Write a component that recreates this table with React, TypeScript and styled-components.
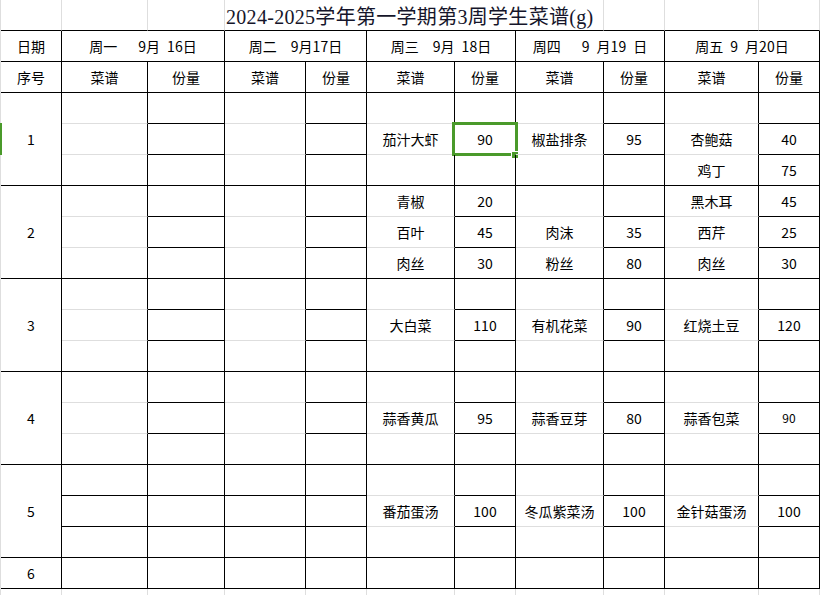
import React from 'react';
import styled, { createGlobalStyle } from 'styled-components';

const BLACK = '#000';
const GRID = '#dedede';
const GREEN = '#4a9a2a';
const H = '\u2002';

const GlobalStyle = createGlobalStyle`
  html, body { margin: 0; padding: 0; background: #fff; overflow: hidden; }
  body {
    font-family: "Noto Sans CJK SC", "Liberation Sans", sans-serif;
    color: #000;
  }
`;

const Sheet = styled.div`
  position: relative;
  width: max-content;
  border-left: 1px solid ${GRID};
`;

const Grid = styled.div`
  display: grid;
  grid-template-columns: 61px 86px 77px 81px 61px 88px 61px 88px 61px 94px 61px;
  grid-auto-rows: 31px;
`;

type Line = 'black' | 'gray' | 'none';
const lineColor = (l: Line) => (l === 'black' ? BLACK : l === 'gray' ? GRID : 'transparent');

const Cell = styled.div<{ $span?: number; $rows?: number; $bottom?: Line; $right?: Line; $small?: boolean }>`
  grid-column: span ${(p) => p.$span ?? 1};
  grid-row: span ${(p) => p.$rows ?? 1};
  box-sizing: border-box;
  position: relative;
  border-right: 1px solid ${(p) => lineColor(p.$right ?? 'black')};
  border-bottom: 1px solid ${(p) => lineColor(p.$bottom ?? 'black')};
  display: flex;
  align-items: center;
  justify-content: center;
  font-size: ${(p) => (p.$small ? '12px' : '14px')};
  font-weight: 400;
  line-height: 1;
  white-space: pre;
`;

const TitleCell = styled(Cell)`
  justify-content: flex-start;
  padding: 3px 0 0 1px;
  overflow: visible;
  font-family: "Liberation Serif", "Noto Sans CJK SC", serif;
  font-size: 20px;
  letter-spacing: 0.3px;
  color: #15152a;
`;

const Selection = styled.div`
  position: absolute;
  left: -3px;
  top: -2px;
  width: 66px;
  height: 34px;
  box-sizing: border-box;
  border: 3px solid ${GREEN};
  pointer-events: none;
`;

const FillHandle = styled.div`
  position: absolute;
  left: 56px;
  top: 26px;
  width: 8px;
  height: 8px;
  box-sizing: border-box;
  background: ${GREEN};
  border: 1px solid #fff;
`;

const RowMarker = styled.div`
  position: absolute;
  left: -1px;
  top: 123px;
  width: 2px;
  height: 32px;
  background: ${GREEN};
`;

type Val = string | { t: string; small?: boolean; selected?: boolean };

interface Item {
  no: string;
  rows: Val[][];
  solid: number[]; // column indexes (0 = B) with black inner lines
}

const QTY = [1, 3, 5, 7, 9];
const ITEM5 = [0, 1, 2, 3, 5, 7, 9];

const e = ['', '', '', '', '', '', '', '', '', ''];

const items: Item[] = [
  {
    no: '1',
    solid: QTY,
    rows: [
      e,
      ['', '', '', '', '茄汁大虾', { t: '90', selected: true }, '椒盐排条', '95', '杏鲍菇', '40'],
      ['', '', '', '', '', '', '', '', '鸡丁', '75'],
    ],
  },
  {
    no: '2',
    solid: QTY,
    rows: [
      ['', '', '', '', '青椒', '20', '', '', '黑木耳', '45'],
      ['', '', '', '', '百叶', '45', '肉沫', '35', '西芹', '25'],
      ['', '', '', '', '肉丝', '30', '粉丝', '80', '肉丝', '30'],
    ],
  },
  {
    no: '3',
    solid: QTY,
    rows: [e, ['', '', '', '', '大白菜', '110', '有机花菜', '90', '红烧土豆', '120'], e],
  },
  {
    no: '4',
    solid: QTY,
    rows: [e, ['', '', '', '', '蒜香黄瓜', '95', '蒜香豆芽', '80', '蒜香包菜', { t: '90', small: true }], e],
  },
  {
    no: '5',
    solid: ITEM5,
    rows: [e, ['', '', '', '', '番茄蛋汤', '100', '冬瓜紫菜汤', '100', '金针菇蛋汤', '100'], e],
  },
];

const days = [
  `周一${H}${H}${H}9月${H}16日`,
  `周二${H}${H}9月17日`,
  `周三${H}${H}9月${H}18日`,
  `周四${H}${H}${H}9${H}月19${H}日`,
  `周五${H}9${H}月20日`,
];

const heads = ['菜谱', '份量', '菜谱', '份量', '菜谱', '份量', '菜谱', '份量', '菜谱', '份量'];

function renderVal(v: Val, key: string, bottom: Line) {
  const o = typeof v === 'string' ? { t: v } : v;
  return (
    <Cell key={key} $bottom={bottom} $small={o.small}>
      {o.t}
      {o.selected && (
        <Selection>
          <FillHandle />
        </Selection>
      )}
    </Cell>
  );
}

export default function App() {
  const cells: React.ReactNode[] = [];

  // Title row
  cells.push(<Cell key="t0" $right="gray" />);
  cells.push(<Cell key="t1" $right="gray" />);
  cells.push(<Cell key="t2" $right="gray" />);
  cells.push(
    <TitleCell key="t3" $span={5} $right="gray">
      2024-2025学年第一学期第3周学生菜谱(g)
    </TitleCell>
  );
  cells.push(<Cell key="t4" $right="gray" />);
  cells.push(<Cell key="t5" $right="gray" />);
  cells.push(<Cell key="t6" $right="gray" />);

  // Date row
  cells.push(<Cell key="d0">日期</Cell>);
  days.forEach((d, i) =>
    cells.push(
      <Cell key={`d${i + 1}`} $span={2}>
        {d}
      </Cell>
    )
  );

  // Header row
  cells.push(<Cell key="h0">序号</Cell>);
  heads.forEach((h, i) => cells.push(<Cell key={`h${i + 1}`}>{h}</Cell>));

  // Items
  items.forEach((item, ii) => {
    item.rows.forEach((row, ri) => {
      if (ri === 0)
        cells.push(
          <Cell key={`n${ii}`} $rows={3}>
            {item.no}
          </Cell>
        );
      row.forEach((v, ci) => {
        const bottom: Line = ri === 2 || item.solid.includes(ci) ? 'black' : 'gray';
        cells.push(renderVal(v, `c${ii}-${ri}-${ci}`, bottom));
      });
    });
  });

  // Row 6
  cells.push(<Cell key="n6">6</Cell>);
  e.forEach((_, ci) => cells.push(<Cell key={`r6-${ci}`} />));

  // Trailing empty sheet row
  for (let ci = 0; ci < 11; ci++) cells.push(<Cell key={`x${ci}`} $right="gray" $bottom="gray" />);

  return (
    <>
      <GlobalStyle />
      <Sheet>
        <Grid>{cells}</Grid>
        <RowMarker />
      </Sheet>
    </>
  );
}
